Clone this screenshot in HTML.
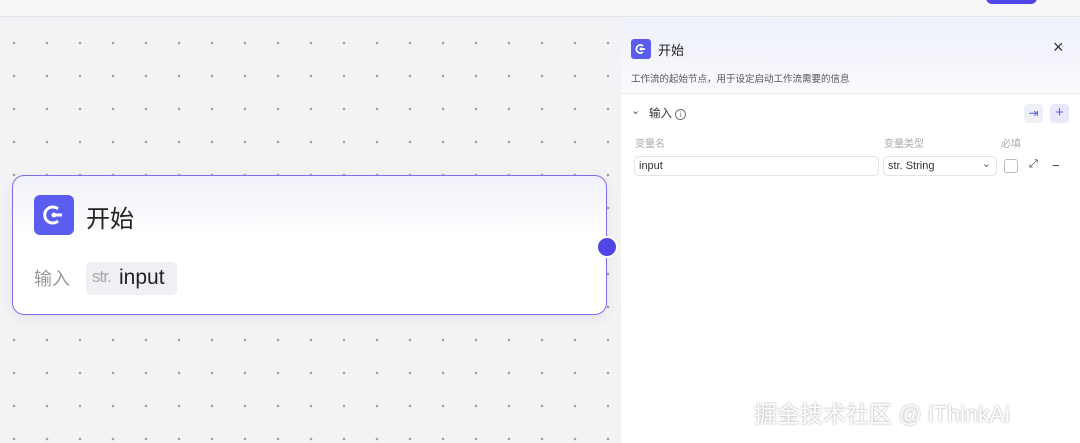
<!DOCTYPE html><html><head><meta charset="utf-8"><style>
*{margin:0;padding:0;box-sizing:border-box}
body{width:1080px;height:443px;overflow:hidden;background:#f3f3f5;font-family:"Liberation Sans","Noto Sans CJK SC",sans-serif;position:relative}
.top{position:absolute;left:0;top:0;width:1080px;height:17px;background:#f7f7f9;border-bottom:1px solid #e4e4e8}
.canvas{position:absolute;left:0;top:18px;width:620px;height:425px;background-color:#f3f3f5;background-image:radial-gradient(circle,#a0a0a8 1.1px,transparent 1.5px);background-size:33px 33px;background-position:-2.5px 8.5px}
.node{position:absolute;left:12px;top:175px;width:595px;height:140px;border:1.5px solid #7b6ff0;border-radius:12px;background:linear-gradient(#f1f1fa,#fff 45%);box-shadow:0 4px 14px rgba(0,0,0,.06)}
.ic{position:absolute;width:40px;height:40px;border-radius:6px;background:#5b5cf0}
.panel{position:absolute;left:621px;top:18px;width:459px;height:425px;background:#fff}
.ph{height:76px;background:linear-gradient(#eef0fb,#fafafd);border-bottom:1px solid #ececf0}
.t{position:absolute;white-space:nowrap}
.inp{position:absolute;height:20px;border:1px solid #e2e2e8;border-radius:5px;font-size:11px;color:#333;padding:3px 4px}
</style></head><body>
<div class="top"><div style="position:absolute;left:986px;top:-8px;width:51px;height:12px;border-radius:6px;background:#4f46e5"></div></div>
<div class="canvas"></div>
<div class="node">
 <div class="ic" style="left:21px;top:19px"><svg width="40" height="40" viewBox="0 0 40 40"><path d="M24 14a8 8 0 1 0 0 12" fill="none" stroke="#fff" stroke-width="3"/><circle cx="20" cy="20" r="2.5" fill="#fff"/><path d="M20 20h8" stroke="#fff" stroke-width="3"/></svg></div>
 <div class="t" style="left:73px;top:23px;font-size:24px;color:#222">开始</div>
 <div class="t" style="left:21px;top:89px;font-size:18px;color:#999">输入</div>
 <div style="position:absolute;left:73px;top:86px;width:91px;height:33px;background:#f0f0f4;border-radius:5px"></div>
 <div class="t" style="left:79px;top:91px;font-size:17px;color:#aaa;letter-spacing:-1px">str.</div>
 <div class="t" style="left:106px;top:90px;font-size:21px;color:#222">input</div>
 <div style="position:absolute;left:583px;top:60px;width:22px;height:22px;border-radius:50%;background:#4f46e5;border:2px solid #fff"></div>
</div>
<div class="panel">
 <div class="ph"></div>
 <div class="ic" style="left:10px;top:21px;width:20px;height:20px;border-radius:3px"><svg width="20" height="20" viewBox="0 0 40 40"><path d="M24 14a8 8 0 1 0 0 12" fill="none" stroke="#fff" stroke-width="3.5"/><circle cx="20" cy="20" r="3" fill="#fff"/><path d="M20 20h8" stroke="#fff" stroke-width="3.5"/></svg></div>
 <div class="t" style="left:37px;top:22px;font-size:13px;color:#222">开始</div>
 <div class="t" style="left:432px;top:19px;font-size:18px;color:#333">×</div>
 <div class="t" style="left:10px;top:53px;font-size:9.5px;color:#555">工作流的起始节点，用于设定启动工作流需要的信息</div>
 <div class="t" style="left:10px;top:86px;font-size:11px;color:#555">⌄</div>
 <div class="t" style="left:28px;top:87px;font-size:11.5px;color:#333">输入 <span style="display:inline-block;width:11px;height:11px;border:1px solid #777;border-radius:50%;font-size:8px;text-align:center;line-height:9px;color:#777">i</span></div>
 <div style="position:absolute;left:403px;top:86px;width:19px;height:19px;border-radius:4px;background:#eef0f6;color:#5b5cf0;font-size:12px;text-align:center;line-height:18px">⇥</div>
 <div style="position:absolute;left:429px;top:86px;width:19px;height:19px;border-radius:4px;background:#e8e8fd;color:#5b5cf0;font-size:15px;text-align:center;line-height:18px">+</div>
 <div class="t" style="left:14px;top:117px;font-size:10px;color:#aaa">变量名</div>
 <div class="t" style="left:263px;top:117px;font-size:10px;color:#aaa">变量类型</div>
 <div class="t" style="left:380px;top:117px;font-size:10px;color:#aaa">必填</div>
 <div class="inp" style="left:13px;top:138px;width:245px">input</div>
 <div class="inp" style="left:262px;top:138px;width:114px">str. String<span style="position:absolute;right:5px;top:0;color:#666">⌄</span></div>
 <div style="position:absolute;left:383px;top:141px;width:14px;height:14px;border:1px solid #bbb;border-radius:3px"></div>
 <div class="t" style="left:408px;top:140px;font-size:11px;color:#333">⤢</div>
 <div class="t" style="left:431px;top:140px;font-size:13px;color:#333">−</div>
</div>
<div class="t" style="left:754px;top:395px;font-size:23px;color:#fff;text-shadow:0 0 2px rgba(0,0,0,.4)">掘金技术社区 @ iThinkAi</div>
</body></html>
